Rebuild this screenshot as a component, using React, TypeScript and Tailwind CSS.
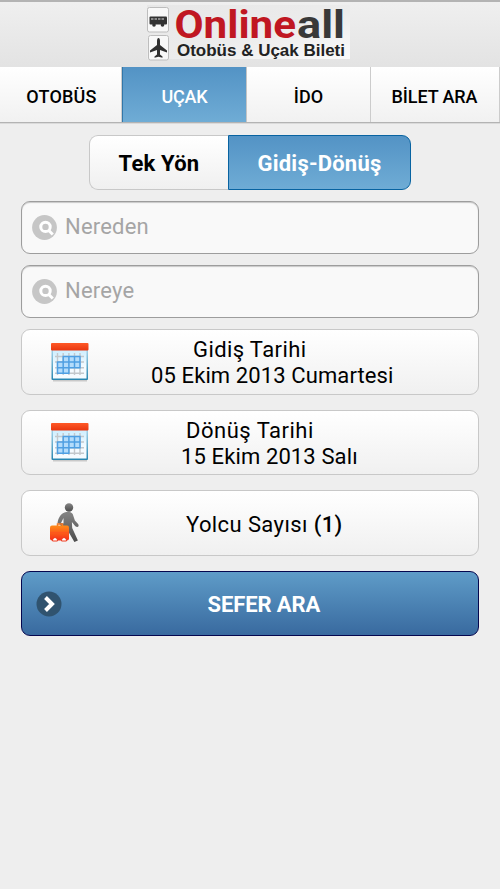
import { clsx } from "clsx";

const tabs = [
  { label: "OTOBÜS", width: "w-[122px]", text: "tracking-[0.2px] pl-[2px]" },
  { label: "UÇAK", width: "w-[125px]", text: "tracking-[-0.2px]", active: true },
  { label: "İDO", width: "w-[124px]", text: "tracking-[0.1px]" },
  { label: "BİLET ARA", width: "w-[129px]", text: "tracking-[-0.1px] pr-[1px]" },
];

function Logo() {
  return (
    <svg width="206" height="58" viewBox="146 4 206 58" className="overflow-visible">
      <defs>
        <linearGradient id="logoBg" x1="0" y1="0" x2="1" y2="1">
          <stop offset="0" stopColor="#e7e7e7" />
          <stop offset="0.55" stopColor="#ececec" />
          <stop offset="1" stopColor="#fafafa" />
        </linearGradient>
      </defs>
      <rect x="147" y="5" width="203" height="54" fill="url(#logoBg)" />
      <rect x="147.500" y="7.500" width="21" height="24.500" rx="2" fill="#f8f8f8" stroke="#bdbdbd" />
      <rect x="148.500" y="35.500" width="20" height="24.500" rx="2" fill="#f8f8f8" stroke="#bdbdbd" />
      {/* bus */}
      <rect x="149.500" y="16.500" width="17.500" height="8" rx="1" fill="#333" />
      <path d="M151 19h14" stroke="#888" strokeWidth="2" strokeDasharray="2.5 1" />
      <circle cx="154" cy="25" r="1.800" fill="#333" />
      <circle cx="162.500" cy="25" r="1.800" fill="#333" />
      {/* plane */}
      <path
        d="M158.500 38c-1 0-1.500 1.500-1.500 3v4l-7 5.500v2l7-2.500v4.500l-2.500 2v1.200l4-1 4 1v-1.200l-2.500-2V50l7 2.500v-2L160 45v-4c0-1.500-.5-3-1.500-3z"
        fill="#303030"
      />
      <text
        x="174.500"
        y="37.500"
        textLength="121.500"
        lengthAdjust="spacingAndGlyphs"
        fontFamily="Roboto, sans-serif"
        fontWeight="700"
        fontSize="38"
        fill="#c01722"
      >
        Online
      </text>
      <text
        x="297"
        y="37.500"
        textLength="48"
        lengthAdjust="spacingAndGlyphs"
        fontFamily="Roboto, sans-serif"
        fontWeight="700"
        fontSize="38"
        fill="#393939"
      >
        all
      </text>
      <text
        x="177"
        y="55.500"
        textLength="168"
        lengthAdjust="spacingAndGlyphs"
        fontFamily="'Liberation Sans', sans-serif"
        fontWeight="700"
        fontSize="16"
        fill="#222"
      >
        Otobüs &amp; Uçak Bileti
      </text>
    </svg>
  );
}

function SearchBadge() {
  return (
    <svg width="25" height="25" viewBox="0 0 25 25">
      <circle cx="12.500" cy="12.500" r="12.400" fill="#c6c6c6" />
      <circle cx="13.500" cy="11.900" r="4.700" fill="none" stroke="#fff" strokeWidth="3" />
      <path d="M16.500 15.300l4.300 4.200" stroke="#fff" strokeWidth="3" />
    </svg>
  );
}

function CalendarIcon() {
  return (
    <svg width="40" height="41" viewBox="0 0 40 41">
      <defs>
        <linearGradient id="calFrame" x1="0" y1="0" x2="0" y2="1">
          <stop offset="0" stopColor="#b4dcef" />
          <stop offset="1" stopColor="#2886b0" />
        </linearGradient>
        <linearGradient id="calTop" x1="0" y1="0" x2="0" y2="1">
          <stop offset="0" stopColor="#ff5826" />
          <stop offset="1" stopColor="#e83610" />
        </linearGradient>
        <linearGradient id="calPage" x1="0" y1="0" x2="0" y2="1">
          <stop offset="0" stopColor="#cdeeff" />
          <stop offset="0.6" stopColor="#f5fbff" />
        </linearGradient>
      </defs>
      <path d="M3 38.500h34" stroke="#c9c9c9" strokeWidth="2" />
      <rect x="1.500" y="4" width="36.500" height="34" rx="1" fill="url(#calFrame)" />
      <rect x="3" y="8" width="33.500" height="28.500" fill="url(#calPage)" />
      <rect x="1" y="1" width="37.500" height="7.500" rx="1" fill="url(#calTop)" />
      <path
        d="M7.500 11v22M13.200 11v22M18.900 11v22M24.500 11v22M30 11v22M5 14.500h29M5 20h29M5 25.700h29M5 31.200h29"
        stroke="#c3c8cc"
        strokeWidth="1.400"
      />
      <path d="M13.200 14.500H30v11.200H18.900v5.500H7.500V20h5.700z" fill="#b4dcfb" />
      <path
        d="M13.200 14.500H30v11.200H18.900v5.500H7.500V20h5.700zM13.200 20H30M7.500 25.700h11.400M13.200 20v11.200M18.900 14.500v11.200M24.500 14.500v11.200"
        fill="none"
        stroke="#4f9fe2"
        strokeWidth="1.500"
      />
    </svg>
  );
}

function TravellerIcon() {
  return (
    <svg width="32" height="40" viewBox="0 0 32 40">
      <defs>
        <linearGradient id="person" x1="0" y1="0" x2="0" y2="1">
          <stop offset="0" stopColor="#858585" />
          <stop offset="1" stopColor="#4b4b4b" />
        </linearGradient>
        <linearGradient id="bag" x1="0" y1="0" x2="0" y2="1">
          <stop offset="0" stopColor="#ff8b19" />
          <stop offset="1" stopColor="#f72e17" />
        </linearGradient>
      </defs>
      <circle cx="20" cy="4.500" r="4.200" fill="url(#person)" />
      <path
        d="M15.500 9.500c3-1.200 6.500-.8 8.200 1.500l2.200 6.500 3.200 3.500c1 1.200.6 3-1 3-1 0-1.600-.5-2.200-1.200l-3-3.800.3 6L28.900 37.500l-3.500 1.500L19 28l-4-1-5-6.500H8.500c.5-4.500 2.500-9.500 7-11zM14.500 15l-2.500 5 2.500.5z"
        fill="url(#person)"
      />
      <path d="M8.500 23v-2h5v2" fill="none" stroke="#f47b28" strokeWidth="1.500" />
      <rect x="1" y="22.500" width="19" height="15" rx="2" fill="url(#bag)" />
      <path d="M1 29.500h19" stroke="#ff561c" />
      <path d="M3.500 38c0-4.500 5-4.500 5 0zM12.500 38c0-4.500 5-4.500 5 0z" fill="#fff" stroke="#ee3d20" />
    </svg>
  );
}

function SearchField({ placeholder }: { placeholder: string }) {
  return (
    <div className="flex h-[53px] items-center rounded-[9px] border border-[#9d9d9d] bg-[#f9f9f9] pl-[10px] shadow-[inset_0_1px_1px_#c8c8c8]">
      <SearchBadge />
      <span className="-mt-[2px] ml-[8px] text-[22px] leading-[26px] tracking-[0.2px] text-[#a5a5a5]">
        {placeholder}
      </span>
    </div>
  );
}

const rowClass =
  "flex h-[65.5px] items-center rounded-[9px] border border-[#c8c8c8] bg-linear-to-b from-white to-[#f0f0f0] pl-[28px] pt-[1px]";

export default function App() {
  return (
    <div className="h-[889px] w-[500px] overflow-hidden bg-[#eee] font-['Roboto',sans-serif] text-black">
      <header className="flex h-[67px] justify-center border-t-2 border-[#b3b3b3] bg-linear-to-b from-[#efefef] to-[#e3e3e3] pt-[2px] pr-[2px]">
        <Logo />
      </header>

      <nav className="flex h-[56px] border-b border-[#b3b3b3] shadow-[0_1px_0_#dadada]">
        {tabs.map((tab) => (
          <div
            key={tab.label}
            className={clsx(
              "flex items-center justify-center border-r pt-[3px] text-[18px] font-medium",
              tab.width,
              tab.text,
              tab.active
                ? "border-l border-r-[#c4c4c4] border-l-[#3277a9] bg-linear-to-b from-[#5393c5] to-[#6facd5] font-bold text-white"
                : "border-[#ccc] bg-linear-to-b from-white to-[#f1f1f1]"
            )}
          >
            {tab.label}
          </div>
        ))}
      </nav>

      <main className="px-[21px] pt-[12px]">
        {/* trip type */}
        <div className="mx-auto flex h-[55px] w-[322px] text-[22px] font-bold tracking-[0.2px]">
          <div className="flex w-[139px] items-center justify-center rounded-l-[9px] border border-r-0 border-[#c8c8c8] bg-linear-to-b from-white to-[#f0f0f0] pt-[1px]">
            Tek Yön
          </div>
          <div className="flex flex-1 items-center justify-center rounded-r-[9px] border border-[#0863a1] bg-linear-to-b from-[#5393c5] to-[#6facd5] pt-[1px] text-white">
            Gidiş-Dönüş
          </div>
        </div>

        <div className="mt-[11px] flex flex-col gap-[11px]">
          <SearchField placeholder="Nereden" />
          <SearchField placeholder="Nereye" />
        </div>

        <div className="mt-[11px] flex flex-col gap-[15.1px] text-[22px] leading-[26px]">
          <div className={rowClass}>
            <CalendarIcon />
            <div className="mt-[1px] ml-[61px] flex flex-col">
              <span className="ml-[42px] tracking-[0.4px]">Gidiş Tarihi</span>
              <span className="tracking-[0.11px]">05 Ekim 2013 Cumartesi</span>
            </div>
          </div>
          <div className={rowClass}>
            <CalendarIcon />
            <div className="mt-[2px] ml-[91px] flex flex-col">
              <span className="ml-[5px] tracking-[0.5px]">Dönüş Tarihi</span>
              <span className="tracking-[0.12px]">15 Ekim 2013 Salı</span>
            </div>
          </div>
          <div className={rowClass}>
            <div className="-ml-[1px]">
              <TravellerIcon />
            </div>
            <span className="mt-[3px] ml-[105px] tracking-[0.4px]">
              Yolcu Sayısı <b className="font-medium">(1)</b>
            </span>
          </div>
          <div className="flex h-[65px] items-center rounded-[9px] border border-[#05074f] bg-linear-to-b from-[#5f9cc8] to-[#396a9f] pt-[2px] pl-[14px]">
            <svg width="26" height="26" viewBox="0 0 26 26">
              <circle cx="13" cy="13" r="12.500" fill="#30536f" />
              <path d="M9.500 6.500l6.500 6.500-6.500 6.500" fill="none" stroke="#fff" strokeWidth="4" />
            </svg>
            <span className="mt-[2px] ml-[145.5px] font-bold tracking-[-0.1px] text-white">SEFER ARA</span>
          </div>
        </div>
      </main>
    </div>
  );
}
